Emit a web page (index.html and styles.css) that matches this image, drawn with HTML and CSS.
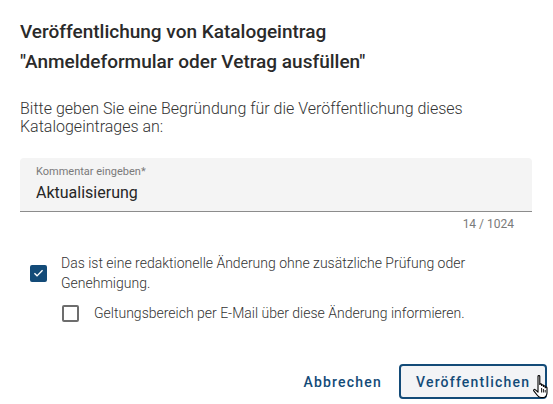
FILE: index.html
```html
<!DOCTYPE html>
<html lang="de">
<head>
    <meta charset="UTF-8">
    <meta name="viewport" content="width=device-width, initial-scale=1.0">
    <title>Veröffentlichung</title>
    <link rel="stylesheet" href="styles.css">
</head>
<body>
    <div class="dialog">
        <h1 class="dialog-title">Veröffentlichung von Katalogeintrag<br>"Anmeldeformular oder Vetrag ausfüllen"</h1>

        <p class="intro">Bitte geben Sie eine Begründung für die Veröffentlichung dieses Katalogeintrages an:</p>

        <div class="field">
            <div class="field-box">
                <label class="field-label" for="comment">Kommentar eingeben*</label>
                <input class="field-input" id="comment" type="text" value="Aktualisierung">
            </div>
            <div class="field-hint">14 / 1024</div>
        </div>

        <div class="check-row">
            <span class="box checked">
                <svg width="14" height="14" viewBox="0 0 24 24"><path d="M4.5 12.5l4.8 4.8L19.5 7" fill="none" stroke="#fff" stroke-width="2.6"/></svg>
            </span>
            <span class="check-label">Das ist eine redaktionelle Änderung ohne zusätzliche Prüfung oder Genehmigung.</span>
        </div>

        <div class="check-row sub">
            <span class="box"></span>
            <span class="check-label">Geltungsbereich per E-Mail über diese Änderung informieren.</span>
        </div>

        <div class="actions">
            <button class="btn">Abbrechen</button>
            <button class="btn outlined">Veröffentlichen</button>
        </div>
    </div>

    <svg class="cursor" width="20" height="26" viewBox="0 0 20 26">
        <path d="M6 2.2c0-1 1.8-1 1.8 0v8.3c0-1 1.8-1 1.8 0v1c0-1 1.8-1 1.8 0v1c0-1 1.8-1 1.8 0v1.2c0-1 1.8-1 1.8 0v5.3c0 2.2-1.6 4.5-3.6 4.5H8.9c-1.6 0-2.5-.8-3.4-2L1.8 16.8c-.7-.9.6-2 1.4-1.2L6 18.2z" fill="#fff" stroke="#000" stroke-width="1.1" stroke-linejoin="round"/>
        <path d="M9.6 14v4.5M11.4 15v3.5M13.2 16v2.5" stroke="#000" stroke-width="0.9"/>
    </svg>
</body>
</html>
```

FILE: styles.css
```css
body { margin: 0; background: #fff; font-family: Roboto, "Liberation Sans", sans-serif; color: #212121; }
.dialog { padding: 17px 6px 0 20px; }
.dialog-title { margin: 0; font-size: 19px; font-weight: 500; line-height: 30px; color: #2a2a2a; }
.intro { margin: 23px 0 0; font-size: 16px; font-weight: 300; line-height: 18px; color: #333; width: 500px; }

.field { margin-top: 22px; width: 512px; }
.field-box { background: #f4f4f4; border-radius: 4px 4px 0 0; border-bottom: 1px solid #8c8c8c; height: 54px; padding: 0 16px; box-sizing: border-box; }
.field-label { display: block; padding-top: 7px; font-size: 11px; line-height: 14px; color: #7a7a7a; }
.field-input { display: block; border: none; background: transparent; padding: 0; margin-top: 4px; font-family: inherit; font-size: 16px; line-height: 20px; color: #262626; width: 100%; outline: none; }
.field-hint { text-align: right; padding-right: 18px; font-size: 12px; line-height: 14px; margin-top: 5px; color: #7a7a7a; }

.check-row { display: flex; align-items: center; margin-top: 22px; }
.check-row.sub { margin-top: 10px; padding-left: 32px; }
.box { flex: none; width: 17px; height: 17px; box-sizing: border-box; border: 2px solid #6d6d6d; border-radius: 2px; margin: 0 14px 0 10px; display: flex; align-items: center; justify-content: center; }
.box.checked { background: #134b78; border-color: #134b78; }
.check-row.sub .box { margin-right: 15px; }
.check-label { font-size: 14px; font-weight: 300; line-height: 20px; color: #333; width: 450px; }

.actions { display: flex; justify-content: flex-end; align-items: center; gap: 11px; margin-top: 41px; }
.btn { font-family: inherit; font-size: 14px; font-weight: 500; letter-spacing: 1.2px; color: #134b78; background: transparent; border: none; padding: 0 6px; height: 35px; cursor: pointer; }
.outlined { border: 2px solid #134b78; border-radius: 4px; background: #f3f4f6; padding: 0 15px; width: 148px; }

.cursor { position: absolute; left: 532px; top: 374px; }
```
